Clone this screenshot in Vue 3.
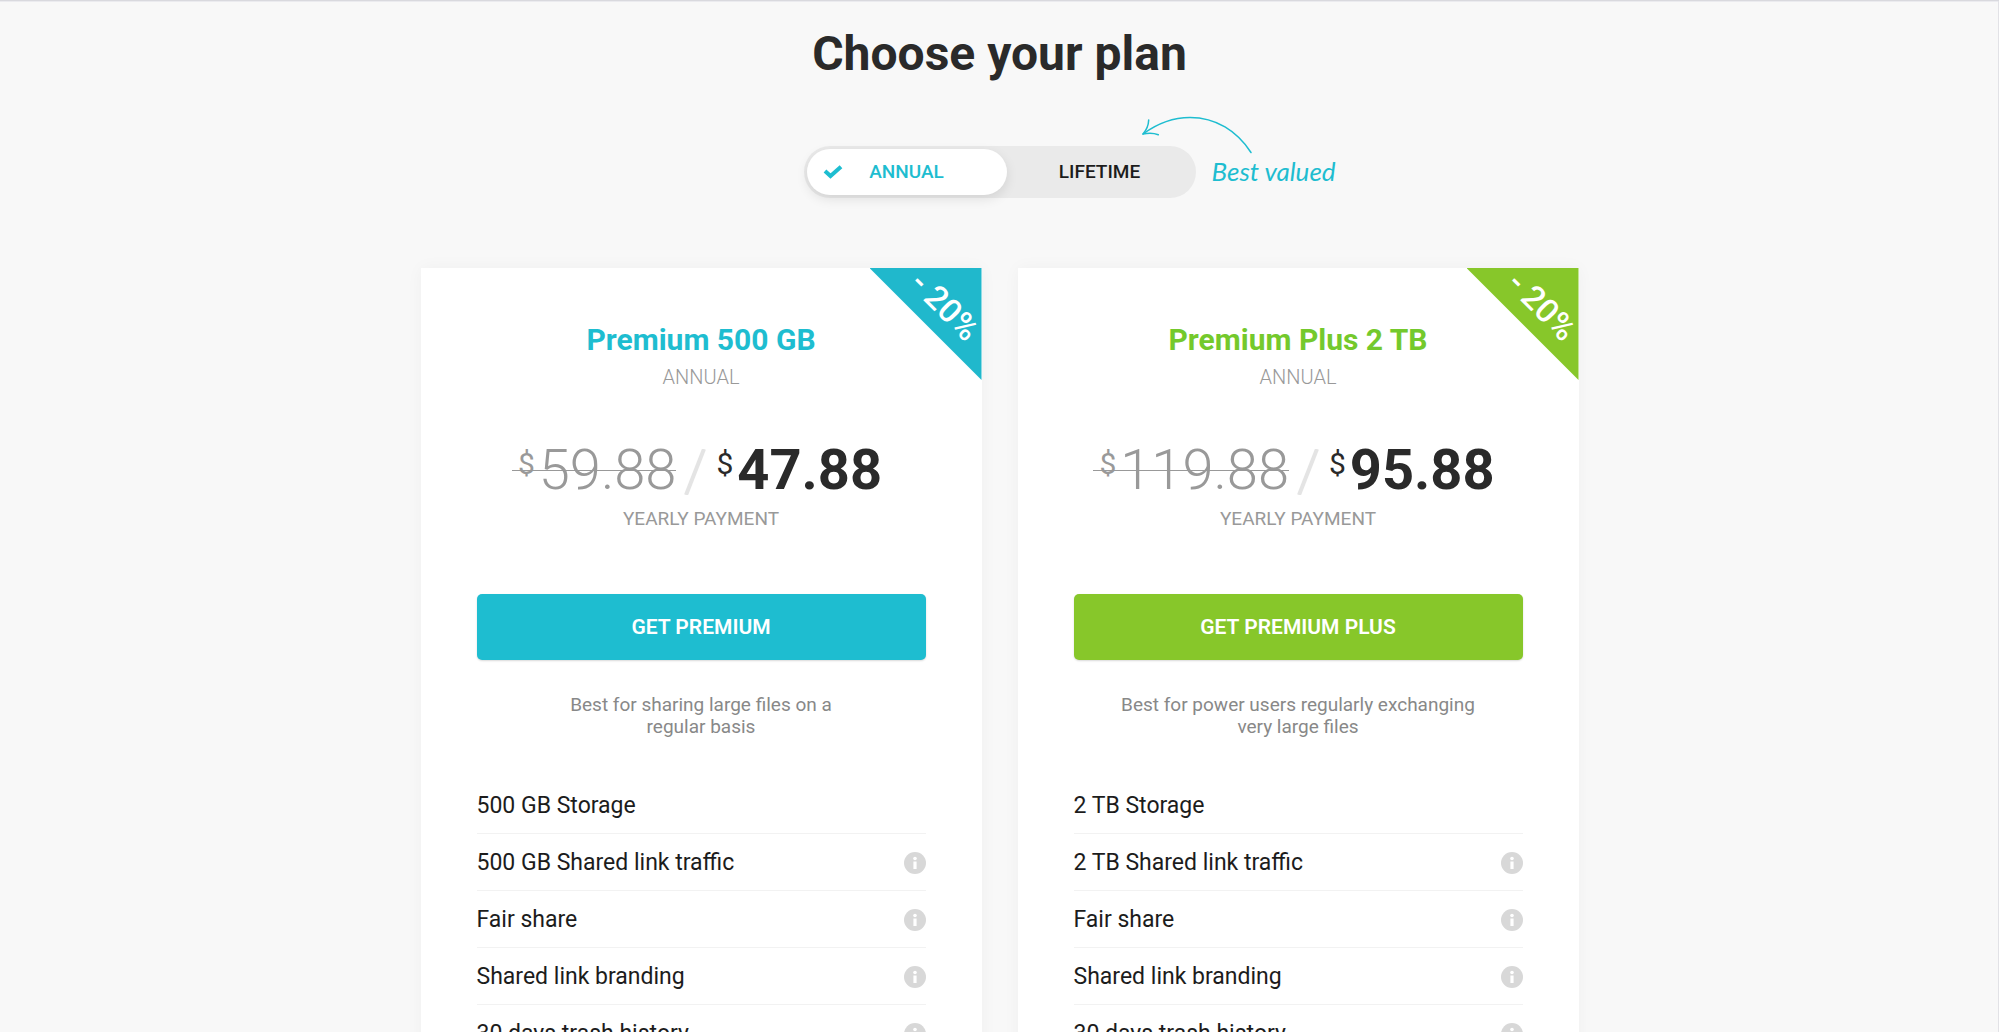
<script setup>
import { ref } from 'vue'

const billing = ref('annual')

const plans = [
  {
    id: 'premium',
    name: 'Premium 500 GB',
    oldPrice: '59.88',
    price: '47.88',
    action: 'GET PREMIUM',
    summary: ['Best for sharing large files on a', 'regular basis'],
    storage: '500 GB'
  },
  {
    id: 'plus',
    name: 'Premium Plus 2 TB',
    oldPrice: '119.88',
    price: '95.88',
    action: 'GET PREMIUM PLUS',
    summary: ['Best for power users regularly exchanging', 'very large files'],
    storage: '2 TB'
  }
]

const features = (plan) => [
  { text: `${plan.storage} Storage`, info: false },
  { text: `${plan.storage} Shared link traffic`, info: true },
  { text: 'Fair share', info: true },
  { text: 'Shared link branding', info: true },
  { text: '30 days trash history', info: true }
]
</script>

<template>
  <main class="page">
    <h1 class="title">Choose your plan</h1>

    <div class="billing">
      <fieldset class="toggle" aria-label="Billing period">
        <label class="option" :class="{ active: billing === 'annual' }">
          <input v-model="billing" type="radio" name="billing" value="annual" />
          <svg v-if="billing === 'annual'" class="check" viewBox="0 0 20 14" aria-hidden="true">
            <path d="M2 6 L7.5 11 L18 1.8" />
          </svg>
          ANNUAL
        </label>
        <label class="option" :class="{ active: billing === 'lifetime' }">
          <input v-model="billing" type="radio" name="billing" value="lifetime" />
          <svg v-if="billing === 'lifetime'" class="check" viewBox="0 0 20 14" aria-hidden="true">
            <path d="M2 6 L7.5 11 L18 1.8" />
          </svg>
          LIFETIME
        </label>
      </fieldset>
      <svg class="arrow" viewBox="0 0 112 40" aria-hidden="true">
        <path d="M1 19 C16 8 32 2.5 48 2.5 C74 2.5 95 16 109 37.5" />
        <path d="M6.7 5 C6.5 10 4.5 15 1 19 C7 17.6 12 18 16.3 19.7" />
      </svg>
      <span class="hint">Best valued</span>
    </div>

    <div class="plans">
      <section v-for="plan in plans" :key="plan.id" class="card" :class="plan.id">
        <div class="ribbon"><span>- 20%</span></div>
        <h2 class="name">{{ plan.name }}</h2>
        <p class="period">ANNUAL</p>
        <div class="prices">
          <del class="old"><span class="currency">$</span>{{ plan.oldPrice }}</del>
          <svg class="slash" viewBox="0 0 22 46" aria-hidden="true"><path d="M2 46 L20 0" /></svg>
          <strong class="now"><span class="currency">$</span>{{ plan.price }}</strong>
        </div>
        <p class="payment">YEARLY PAYMENT</p>
        <button type="button" class="cta">{{ plan.action }}</button>
        <p class="summary">{{ plan.summary[0] }}<br />{{ plan.summary[1] }}</p>
        <ul class="features">
          <li v-for="item in features(plan)" :key="item.text">
            <span>{{ item.text }}</span>
            <button v-if="item.info" type="button" class="info" :aria-label="`About ${item.text}`">
              <svg viewBox="0 0 22 22" aria-hidden="true">
                <circle cx="11" cy="11" r="11" fill="#d8d8d8" />
                <circle cx="11" cy="6.5" r="1.8" fill="#fff" />
                <path d="M9.4 9.5h3.2v7.5h-3.2z" fill="#fff" />
              </svg>
            </button>
          </li>
        </ul>
      </section>
    </div>
  </main>
</template>

<style>
body {
  margin: 0;
  background: #f8f8f8;
}
</style>

<style scoped>
.page {
  box-sizing: border-box;
  height: 100vh;
  overflow: hidden;
  padding-top: 23px;
  border-top: 1px solid #d9d9de;
  box-shadow: inset -1px 0 #e2e2e6, inset 0 1px #ebebef;
  display: flex;
  flex-direction: column;
  align-items: center;
  background: #f8f8f8;
  color: #2a2a2a;
  font-family: Roboto, "Liberation Sans", sans-serif;
}

.title {
  margin: 0 0 62px;
  font-size: 48px;
  line-height: 60px;
  font-weight: 700;
}

.billing {
  position: relative;
  flex: none;
  margin-bottom: 70px;
}

.toggle {
  box-sizing: border-box;
  display: flex;
  width: 392px;
  height: 52px;
  margin: 0;
  padding: 3px;
  border: 0;
  border-radius: 26px;
  background: #eaeaea;
}

.option {
  position: relative;
  flex: 1 1 0;
  display: flex;
  align-items: center;
  justify-content: center;
  border-radius: 23px;
  color: #1c1c1c;
  font-size: 19px;
  line-height: 24px;
  font-weight: 500;
  cursor: pointer;
}

.option.active {
  flex-basis: 14px;
  background: #fff;
  color: #1ebdd0;
  box-shadow: 0 4px 12px rgba(0, 0, 0, 0.1);
}

.option input {
  position: absolute;
  inset: 0;
  width: 100%;
  height: 100%;
  margin: 0;
  opacity: 0;
  cursor: pointer;
}

.check {
  position: absolute;
  left: 16px;
  width: 20px;
  height: 14px;
  fill: none;
  stroke: currentColor;
  stroke-width: 4;
}

.arrow {
  position: absolute;
  left: 338px;
  top: -31px;
  width: 112px;
  height: 40px;
  fill: none;
  stroke: #1ebdd0;
  stroke-width: 1.5;
  stroke-linecap: round;
  stroke-linejoin: round;
}

.hint {
  position: absolute;
  left: 408px;
  top: 10px;
  color: #1ebdd0;
  font-family: Lato, sans-serif;
  font-size: 26px;
  line-height: 30px;
  font-style: italic;
  white-space: nowrap;
}

.plans {
  display: flex;
  gap: 36px;
  width: 1158px;
  max-width: 100%;
}

.card {
  position: relative;
  box-sizing: border-box;
  flex: 1 1 0;
  display: flex;
  flex-direction: column;
  padding: 54px 56px;
  background: #fff;
  box-shadow: 0 0 16px rgba(0, 0, 0, 0.04);
  text-align: center;
}

.premium {
  --accent: #1ebdd0;
  --name: #1ebdd0;
  --ribbon: #20b8cc;
}

.plus {
  --accent: #87c72a;
  --name: #74c92c;
  --ribbon: #87c72a;
}

.ribbon {
  position: absolute;
  top: 0;
  right: 0;
  width: 112px;
  height: 112px;
  display: flex;
  align-items: center;
  justify-content: center;
  background: var(--ribbon);
  clip-path: polygon(0 0, 100% 0, 100% 100%);
  color: #fff;
  font-size: 33px;
  line-height: 36px;
  font-weight: 500;
}

.ribbon span {
  padding: 0 0 52px 2px;
  transform: rotate(45deg);
}

.name {
  margin: 0 0 7px;
  color: var(--name);
  font-size: 30px;
  line-height: 36px;
  font-weight: 700;
}

.period,
.payment {
  margin: 0;
  color: #999;
  line-height: 24px;
}

.period {
  margin-bottom: 51px;
  font-size: 20px;
  font-weight: 300;
}

.payment {
  margin-bottom: 63px;
  font-size: 19px;
}

.prices {
  display: flex;
  justify-content: center;
  align-items: center;
  margin: 0 8px 7px 0;
  font-size: 56px;
  line-height: 60px;
}

.old,
.now {
  position: relative;
  display: flex;
}

.old {
  padding-left: 6px;
  color: #999;
  font-weight: 300;
  text-decoration: none;
}

.old::after {
  content: "";
  position: absolute;
  left: 0;
  right: 0;
  top: 30px;
  height: 1px;
  background: #999;
}

.now {
  font-weight: 700;
}

.currency {
  margin-right: 4px;
  font-size: 30px;
  line-height: 48px;
  font-weight: 400;
}

.slash {
  width: 22px;
  height: 46px;
  margin: 4px 10px 0 8px;
  fill: none;
  stroke: #e4e4e4;
  stroke-width: 4;
}

.cta {
  height: 66px;
  margin: 0 0 34px;
  padding: 0;
  border: 0;
  border-radius: 5px;
  background: var(--accent);
  box-shadow: 0 1px 2px rgba(0, 0, 0, 0.15);
  color: #fff;
  font-family: inherit;
  font-size: 21px;
  line-height: 24px;
  font-weight: 600;
  cursor: pointer;
}

.summary {
  margin: 0 0 39px;
  color: #888;
  font-size: 19px;
  line-height: 22px;
}

.features {
  margin: 0;
  padding: 0;
  list-style: none;
  color: #1c1c1c;
  font-size: 23px;
  line-height: 28px;
  text-align: left;
}

.features li {
  display: flex;
  justify-content: space-between;
  align-items: center;
  padding: 15px 0 13px;
  border-bottom: 1px solid #f2f2f2;
}

.info {
  width: 22px;
  height: 22px;
  padding: 0;
  border: 0;
  background: none;
  cursor: pointer;
}

.info svg {
  display: block;
}
</style>
